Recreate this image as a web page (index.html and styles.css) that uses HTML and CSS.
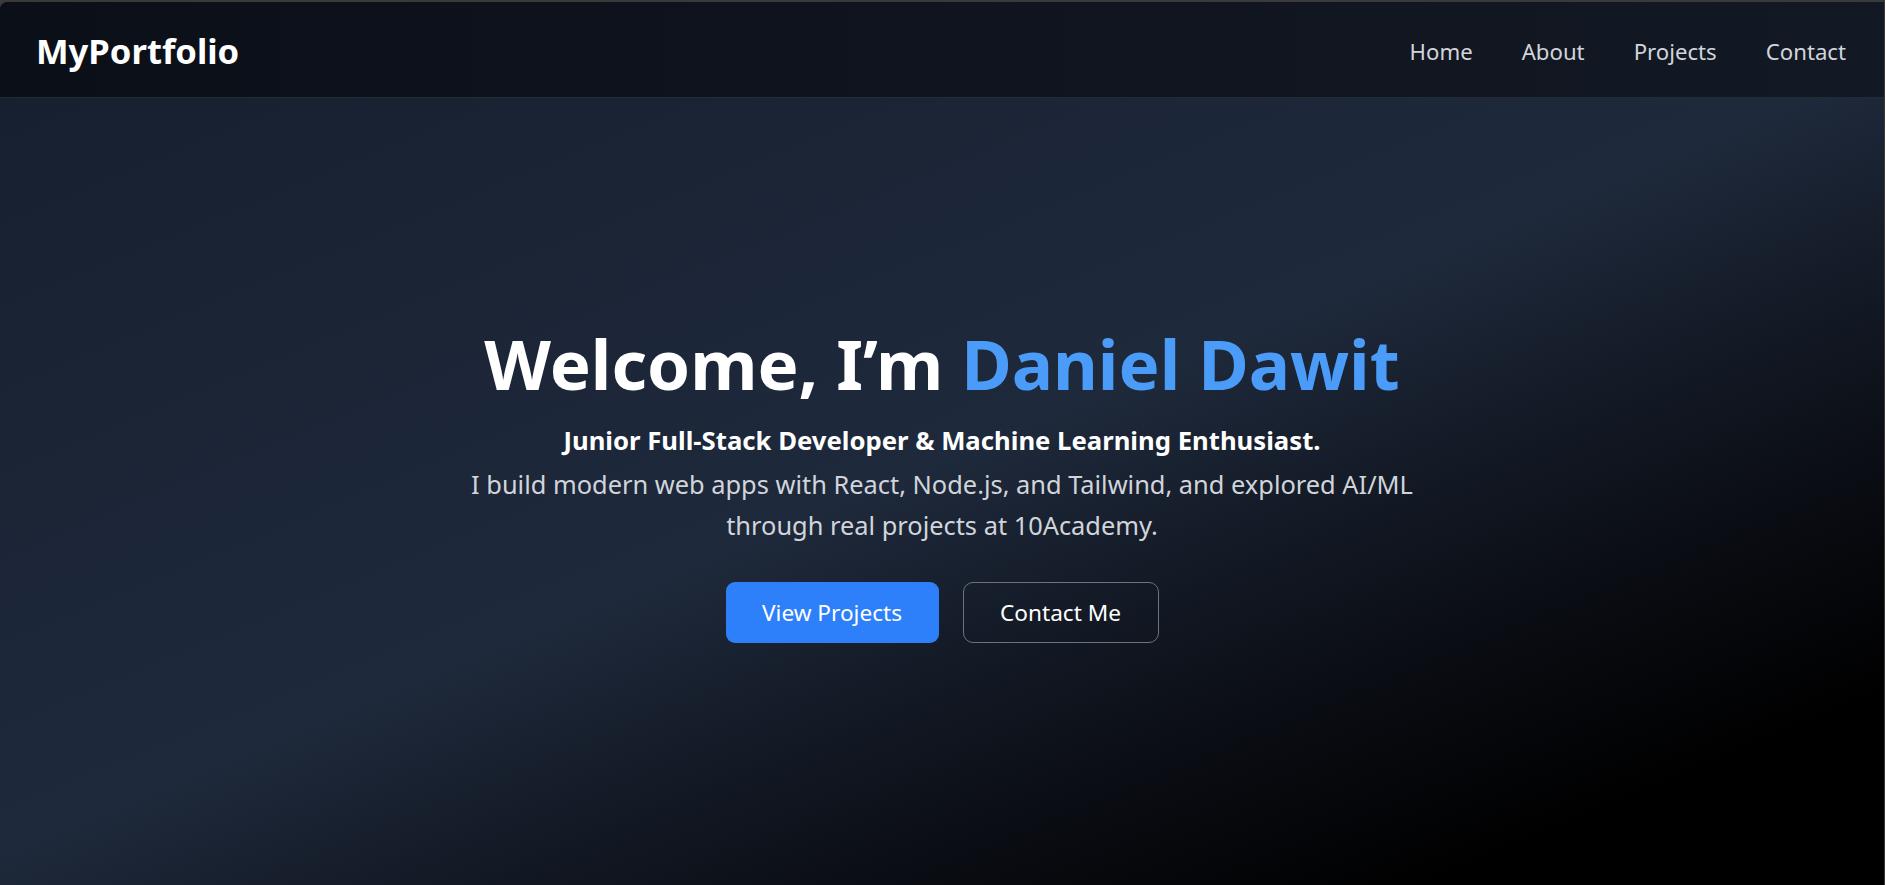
FILE: index.html
```html
<!DOCTYPE html>
<html lang="en">
<head>
<meta charset="utf-8">
<title>MyPortfolio</title>
<link rel="stylesheet" href="styles.css">
</head>
<body>
<div class="window">
  <header class="nav">
    <a class="logo" href="#">MyPortfolio</a>
    <nav class="links">
      <a href="#">Home</a>
      <a href="#">About</a>
      <a href="#">Projects</a>
      <a href="#">Contact</a>
    </nav>
  </header>
  <main class="hero">
    <div class="hero-content">
      <h1 class="title">Welcome, I’m <span class="name">Daniel Dawit</span></h1>
      <p class="subtitle">Junior Full-Stack Developer &amp; Machine Learning Enthusiast.</p>
      <p class="lead">I build modern web apps with React, Node.js, and Tailwind, and explored AI/ML through real projects at 10Academy.</p>
      <div class="actions">
        <a class="btn btn-primary" href="#">View Projects</a>
        <a class="btn btn-outline" href="#">Contact Me</a>
      </div>
    </div>
  </main>
</div>
</body>
</html>
```
FILE: styles.css
```css
* { box-sizing: border-box; }
html, body { height: 100%; }
body {
  margin: 0;
  background: #3a3a3a;
  font-family: "Noto Sans", "Open Sans", sans-serif;
  overflow: hidden;
}
a { text-decoration: none; color: inherit; }

.window {
  margin-top: 2px;
  margin-right: 1px;
  height: calc(100% - 2px);
  border-top-left-radius: 8px;
  overflow: hidden;
  display: flex;
  flex-direction: column;
  background: #000;
}

.nav {
  flex: 0 0 96px;
  display: flex;
  align-items: center;
  justify-content: space-between;
  padding: 0 38px 0 36px;
  background: linear-gradient(to right, #0b0f18, #131924);
  border-bottom: 1px solid #242b37;
}
.logo {
  color: #fff;
  font-weight: 700;
  font-size: 34.6px;
  padding-top: 2px;
}
.links {
  display: flex;
  gap: 49px;
  padding-top: 4px;
}
.links a {
  color: #d1d5db;
  font-size: 22.2px;
}

.hero {
  flex: 1;
  display: flex;
  align-items: center;
  justify-content: center;
  padding-bottom: 4px;
  background: linear-gradient(to bottom right, #172031 0%, #1e293b 48%, #0b0e15 72%, #000 88%);
  text-align: center;
}
.hero-content {
  display: flex;
  flex-direction: column;
  align-items: center;
}
.title {
  margin: 0 0 31px;
  font-size: 69px;
  line-height: 54px;
  font-weight: 700;
  color: #fff;
  white-space: nowrap;
}
.name { color: #4b9cf8; }
.subtitle {
  margin: 0 0 3px;
  font-size: 25.7px;
  line-height: 40px;
  font-weight: 700;
  color: #fff;
}
.lead {
  margin: 0;
  max-width: 960px;
  font-size: 25.4px;
  line-height: 40.6px;
  color: #d1d5db;
}
.actions {
  margin-top: 37px;
  display: flex;
  gap: 24px;
}
.btn {
  height: 61px;
  display: inline-flex;
  align-items: center;
  justify-content: center;
  font-size: 22.6px;
  color: #fff;
  border-radius: 9px;
}
.btn-primary {
  width: 213px;
  background: #2e80fa;
}
.btn-outline {
  width: 196px;
  border: 1px solid #6b7280;
  border-radius: 10px;
}
```
